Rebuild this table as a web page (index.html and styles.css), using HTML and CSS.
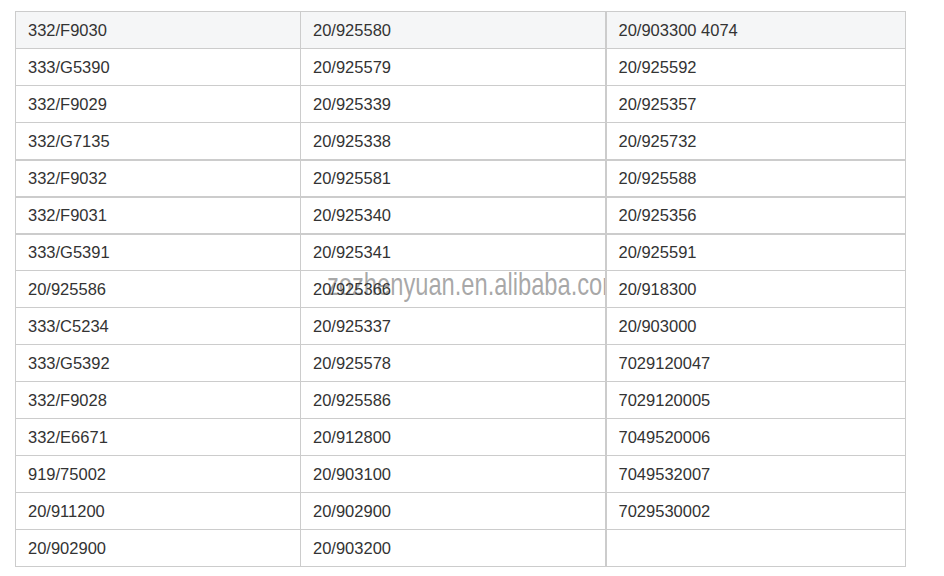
FILE: index.html
```html
<!DOCTYPE html>
<html>
<head>
<meta charset="utf-8">
<link rel="stylesheet" href="styles.css">
</head>
<body>
<table class="parts">
  <colgroup><col class="c1"><col class="c2"><col class="c3"></colgroup>
  <tr class="head"><td>332/F9030</td><td>20/925580</td><td class="last">20/903300 4074</td></tr>
  <tr><td>333/G5390</td><td>20/925579</td><td class="last">20/925592</td></tr>
  <tr><td>332/F9029</td><td>20/925339</td><td class="last">20/925357</td></tr>
  <tr class="thick"><td>332/G7135</td><td>20/925338</td><td class="last">20/925732</td></tr>
  <tr class="thick"><td>332/F9032</td><td>20/925581</td><td class="last">20/925588</td></tr>
  <tr class="thick"><td>332/F9031</td><td>20/925340</td><td class="last">20/925356</td></tr>
  <tr><td>333/G5391</td><td>20/925341</td><td class="last">20/925591</td></tr>
  <tr><td>20/925586</td><td class="wm-cell"><span class="wm">zozhenyuan.en.alibaba.com</span><span class="val">20/925366</span></td><td class="last">20/918300</td></tr>
  <tr><td>333/C5234</td><td>20/925337</td><td class="last">20/903000</td></tr>
  <tr><td>333/G5392</td><td>20/925578</td><td class="last">7029120047</td></tr>
  <tr><td>332/F9028</td><td>20/925586</td><td class="last">7029120005</td></tr>
  <tr><td>332/E6671</td><td>20/912800</td><td class="last">7049520006</td></tr>
  <tr><td>919/75002</td><td>20/903100</td><td class="last">7049532007</td></tr>
  <tr><td>20/911200</td><td>20/902900</td><td class="last">7029530002</td></tr>
  <tr><td>20/902900</td><td>20/903200</td><td class="last"></td></tr>
</table>
</body>
</html>
```

FILE: styles.css
```css
html, body {
  margin: 0;
  padding: 0;
  background: #ffffff;
}

body {
  padding: 11px 0 0 15px;
  font-family: "Liberation Sans", Arial, sans-serif;
  font-size: 16.5px;
  color: #333333;
}

.parts {
  border-collapse: collapse;
  table-layout: fixed;
  width: 890px;
}

.c1 { width: 285px; }
.c2 { width: 305px; }
.c3 { width: 300px; }

.parts td {
  border: 1px solid #cccccc;
  height: 37px;
  padding: 0 12px;
  box-sizing: border-box;
  vertical-align: middle;
  line-height: 18px;
  white-space: nowrap;
  background: #ffffff;
}

.parts td.last {
  border-left: 2px solid #cccccc;
}

.parts .head td {
  background: #f5f6f7;
}

.parts .thick td {
  border-bottom: 2px solid #cccccc;
}

.wm-cell {
  position: relative;
  overflow: hidden;
}

.wm {
  position: absolute;
  left: 26px;
  top: 4px;
  font-size: 23.7px;
  line-height: 24px;
  color: rgba(110, 110, 110, 0.6);
  white-space: nowrap;
  transform: scaleY(1.33);
  transform-origin: 0 20px;
}

.val {
  position: relative;
}
```
